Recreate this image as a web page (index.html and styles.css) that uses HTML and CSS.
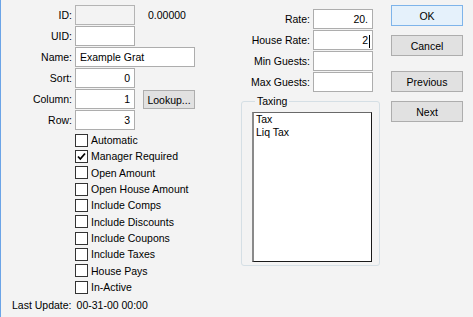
FILE: index.html
```html
<!DOCTYPE html>
<html>
<head>
<meta charset="utf-8">
<link rel="stylesheet" href="styles.css">
</head>
<body>
<div class="dialog">
  <div class="left">
    <div class="form">
      <label class="lbl">ID:</label>
      <div class="field-row"><div class="box disabled"></div><span class="value">0.00000</span></div>
      <label class="lbl">UID:</label>
      <div class="field-row"><div class="box"></div></div>
      <label class="lbl">Name:</label>
      <div class="field-row"><div class="box wide">Example Grat</div></div>
      <label class="lbl">Sort:</label>
      <div class="field-row"><div class="box num">0</div></div>
      <label class="lbl">Column:</label>
      <div class="field-row"><div class="box num">1</div><button class="btn lookup">Lookup...</button></div>
      <label class="lbl">Row:</label>
      <div class="field-row"><div class="box num">3</div></div>
    </div>
    <ul class="checks">
      <li><span class="cb"></span>Automatic</li>
      <li><span class="cb checked"><svg viewBox="0 0 11 11" width="11" height="11"><path d="M2 5.5 L4.3 8 L9 2.5" fill="none" stroke="#000" stroke-width="1.8"/></svg></span>Manager Required</li>
      <li><span class="cb"></span>Open Amount</li>
      <li><span class="cb"></span>Open House Amount</li>
      <li><span class="cb"></span>Include Comps</li>
      <li><span class="cb"></span>Include Discounts</li>
      <li><span class="cb"></span>Include Coupons</li>
      <li><span class="cb"></span>Include Taxes</li>
      <li><span class="cb"></span>House Pays</li>
      <li><span class="cb"></span>In-Active</li>
    </ul>
    <div class="update"><span>Last Update:</span><span>00-31-00 00:00</span></div>
  </div>
  <div class="middle">
    <div class="form form-right">
      <label class="lbl">Rate:</label>
      <div class="box num">20.</div>
      <label class="lbl">House Rate:</label>
      <div class="box num">2<span class="caret"></span></div>
      <label class="lbl">Min Guests:</label>
      <div class="box"></div>
      <label class="lbl">Max Guests:</label>
      <div class="box"></div>
    </div>
    <fieldset class="group">
      <legend>Taxing</legend>
      <div class="listbox">
        <div>Tax</div>
        <div>Liq Tax</div>
      </div>
    </fieldset>
  </div>
  <div class="buttons">
    <button class="btn default">OK</button>
    <button class="btn">Cancel</button>
    <button class="btn prev">Previous</button>
    <button class="btn">Next</button>
  </div>
</div>
</body>
</html>
```
FILE: styles.css
```css
html, body {
  margin: 0;
  padding: 0;
  background: #f3f3f3;
}
body {
  font-family: "Liberation Sans", Arial, sans-serif;
  font-size: 10.5px;
  color: #000;
}
.dialog {
  display: flex;
  height: 317px;
  width: 472px;
  border-left: 1px solid #6ba4e7;
  background: #f3f3f3;
}
.left {
  width: 199px;
  display: flex;
  flex-direction: column;
}
.form {
  display: grid;
  grid-template-columns: 71px auto;
  column-gap: 3px;
  row-gap: 1px;
  grid-auto-rows: 20px;
  padding-top: 5px;
}
.lbl {
  text-align: right;
  line-height: 20px;
  white-space: nowrap;
}
.field-row {
  display: flex;
  align-items: center;
}
.box {
  box-sizing: border-box;
  width: 60px;
  height: 20px;
  border: 1px solid #adadad;
  background: #fff;
  line-height: 18px;
  padding: 0 4px;
  white-space: nowrap;
}
.box.disabled {
  background: #f3f3f3;
  border-color: #b4b4b4;
}
.box.wide {
  width: 120px;
}
.box.num {
  text-align: right;
}
.value {
  margin-left: 13px;
}
.btn {
  box-sizing: border-box;
  font: inherit;
  color: #000;
  background: #e1e1e1;
  border: 1px solid #adadad;
  padding: 0;
  margin: 0;
  width: 72px;
  height: 21px;
}
.btn.lookup {
  width: 52px;
  height: 19px;
  margin-left: 8px;
  margin-top: 1px;
}
.checks {
  list-style: none;
  margin: 2px 0 0 74px;
  padding: 0;
}
.checks li {
  display: flex;
  align-items: center;
  height: 16.33px;
  white-space: nowrap;
}
.cb {
  box-sizing: border-box;
  width: 13px;
  height: 13px;
  border: 1px solid #333;
  background: #fff;
  margin-right: 3px;
  display: flex;
  align-items: center;
  justify-content: center;
}
.cb svg {
  display: block;
}
.update {
  margin-top: 4px;
  padding-left: 11px;
  display: flex;
  gap: 5px;
}
.middle {
  width: 191px;
  display: flex;
  flex-direction: column;
}
.form-right {
  grid-template-columns: 110px 60px;
  padding-top: 9px;
}
.caret {
  display: inline-block;
  width: 1px;
  height: 13px;
  background: #000;
  vertical-align: middle;
  margin-left: 1px;
  margin-right: -2px;
}
.group {
  box-sizing: border-box;
  margin: 3px 0 0 41px;
  width: 139px;
  height: 171px;
  border: 1px solid #d5dfe5;
  border-radius: 3px;
  padding: 4px 0 0 10px;
}
.group legend {
  padding: 0 2px;
  margin-left: 3px;
  line-height: 13px;
}
.listbox {
  box-sizing: border-box;
  width: 120px;
  height: 150px;
  background: #fff;
  border-style: solid;
  border-width: 1px 1px 1px 2px;
  border-color: #696969 #1a1a1a #1a1a1a #8a8a8a;
  padding: 0 0 0 2px;
  line-height: 13px;
}
.buttons {
  display: flex;
  flex-direction: column;
  padding-top: 5px;
  gap: 9px;
}
.btn.default {
  background: #e5f1fb;
  border-color: #7eb4ea;
}
.btn.prev {
  margin-top: 6px;
}
```
